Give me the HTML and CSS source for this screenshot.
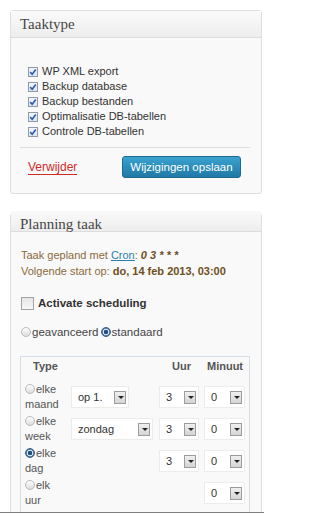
FILE: index.html
```html
<!DOCTYPE html>
<html>
<head>
<meta charset="utf-8">
<link rel="stylesheet" href="styles.css">
</head>
<body>
<div class="page">
  <div class="box box-type">
    <div class="box-head"><h3>Taaktype</h3></div>
    <div class="box-body">
      <ul class="checks">
        <li><span class="cb on"><svg viewBox="0 0 10 10" width="8" height="8"><path d="M1.5 5.2 L4 7.8 L8.5 1.8" fill="none" stroke="#2a5db0" stroke-width="2"/></svg></span>WP XML export</li>
        <li><span class="cb on"><svg viewBox="0 0 10 10" width="8" height="8"><path d="M1.5 5.2 L4 7.8 L8.5 1.8" fill="none" stroke="#2a5db0" stroke-width="2"/></svg></span>Backup database</li>
        <li><span class="cb on"><svg viewBox="0 0 10 10" width="8" height="8"><path d="M1.5 5.2 L4 7.8 L8.5 1.8" fill="none" stroke="#2a5db0" stroke-width="2"/></svg></span>Backup bestanden</li>
        <li><span class="cb on"><svg viewBox="0 0 10 10" width="8" height="8"><path d="M1.5 5.2 L4 7.8 L8.5 1.8" fill="none" stroke="#2a5db0" stroke-width="2"/></svg></span>Optimalisatie DB-tabellen</li>
        <li><span class="cb on"><svg viewBox="0 0 10 10" width="8" height="8"><path d="M1.5 5.2 L4 7.8 L8.5 1.8" fill="none" stroke="#2a5db0" stroke-width="2"/></svg></span>Controle DB-tabellen</li>
      </ul>
      <div class="sep"></div>
      <div class="actions">
        <a class="del" href="#">Verwijder</a>
        <button class="save" type="button">Wijzigingen opslaan</button>
      </div>
    </div>
  </div>

  <div class="box box-plan">
    <div class="box-head"><h3>Planning taak</h3></div>
    <div class="box-body plan-body">
      <p class="info">Taak gepland met <a class="cron" href="#">Cron</a>: <b><i>0 3 * * *</i></b></p>
      <p class="info">Volgende start op: <b>do, 14 feb 2013, 03:00</b></p>
      <div class="activate"><span class="cb big"></span><span>Activate scheduling</span></div>
      <div class="mode"><span class="rd"></span>geavanceerd <span class="rd on"></span>standaard</div>
      <div class="sched">
        <div class="srow head">
          <span class="c-type">Type</span>
          <span></span>
          <span class="c-num">Uur</span>
          <span class="c-num">Minuut</span>
        </div>
        <div class="srow">
          <span class="c-type"><span class="rd"></span>elke<br>maand</span>
          <span class="sel w-op"><span class="val">op 1.</span><span class="arrow"></span></span>
          <span class="sel w-h"><span class="val">3</span><span class="arrow"></span></span>
          <span class="sel w-m"><span class="val">0</span><span class="arrow"></span></span>
        </div>
        <div class="srow">
          <span class="c-type"><span class="rd"></span>elke<br>week</span>
          <span class="sel w-day"><span class="val">zondag</span><span class="arrow"></span></span>
          <span class="sel w-h"><span class="val">3</span><span class="arrow"></span></span>
          <span class="sel w-m"><span class="val">0</span><span class="arrow"></span></span>
        </div>
        <div class="srow">
          <span class="c-type"><span class="rd on"></span>elke<br>dag</span>
          <span></span>
          <span class="sel w-h"><span class="val">3</span><span class="arrow"></span></span>
          <span class="sel w-m"><span class="val">0</span><span class="arrow"></span></span>
        </div>
        <div class="srow">
          <span class="c-type"><span class="rd"></span>elk<br>uur</span>
          <span></span>
          <span></span>
          <span class="sel w-m"><span class="val">0</span><span class="arrow"></span></span>
        </div>
      </div>
    </div>
  </div>
</div>
</body>
</html>
```

FILE: styles.css
```css
html, body {
  margin: 0;
  padding: 0;
  background: #fff;
}
body {
  font-family: "Liberation Sans", Arial, sans-serif;
  font-size: 11px;
  color: #333;
}
.page {
  width: 264px;
  height: 513px;
  overflow: hidden;
  border-bottom: 1px solid #7d7d7d;
  padding-top: 10px;
  box-sizing: border-box;
}
.box {
  margin-left: 10px;
  width: 252px;
  box-sizing: border-box;
  border: 1px solid #dfdfdf;
  border-radius: 3px;
  background: #f9f9f9;
}
.box-head {
  background: linear-gradient(#fafafa, #ededed);
  border-bottom: 1px solid #dcdcdc;
  padding-left: 9px;
}
.box-type .box-head { height: 26px; }
.box-plan .box-head { height: 20px; }
.box-head h3 {
  margin: 0;
  font-family: "Liberation Serif", "Times New Roman", serif;
  font-weight: normal;
  font-size: 15px;
  color: #464646;
}
.box-type .box-head h3 { line-height: 26px; }
.box-plan .box-head h3 { line-height: 26px; margin-top: -3px; }

.checks {
  list-style: none;
  margin: 0;
  padding: 26px 0 0 17px;
}
.checks li {
  height: 15px;
  line-height: 15px;
  display: flex;
  align-items: center;
  color: #333;
}
.cb {
  display: inline-flex;
  align-items: center;
  justify-content: center;
  width: 8px;
  height: 8px;
  border: 1px solid #8f9aab;
  background: linear-gradient(#f4f6f9, #dde3ec);
  margin-right: 4px;
  flex: none;
}
.cb.big {
  width: 11px;
  height: 11px;
  border-color: #a4a4a4;
  background: linear-gradient(#e6e6e6, #f8f8f8);
}
.sep {
  margin: 8px 11px 0 9px;
  border-top: 1px solid #dedede;
}
.actions {
  display: flex;
  justify-content: space-between;
  align-items: center;
  padding: 8px 20px 15px 17px;
}
.del {
  color: #d02a2a;
  font-size: 12px;
  text-decoration: none;
  border-bottom: 1px solid #d02a2a;
  line-height: 14px;
}
.save {
  width: 119px;
  height: 22px;
  border: 1px solid #1e6a8f;
  border-radius: 3px;
  background: linear-gradient(#3aa2d0, #2079a5);
  color: #fff;
  font-family: "Liberation Sans", Arial, sans-serif;
  font-size: 11.5px;
  padding: 0;
}

.box-plan {
  margin-top: 19px;
  height: 600px;
}
.plan-body {
  padding: 15px 0 0 10px;
}
.info {
  margin: 0;
  line-height: 16px;
  color: #8a6a40;
  font-size: 11px;
}
.info b {
  color: #6e4e22;
}
.cron {
  color: #2a7fb0;
  text-decoration: underline;
}
.activate {
  display: flex;
  align-items: center;
  margin-top: 17px;
  height: 14px;
  font-weight: bold;
  font-size: 11.5px;
  color: #333;
}
.mode {
  display: flex;
  align-items: center;
  margin-top: 14px;
  height: 16px;
  color: #444;
  font-size: 11.5px;
}
.rd {
  display: inline-block;
  width: 8px;
  height: 8px;
  border-radius: 50%;
  border: 1px solid #b9b9b9;
  background: linear-gradient(#fff, #dcdcdc);
  margin-right: 1px;
  vertical-align: -1px;
}
.rd.on {
  border-color: #3a5e86;
  background: radial-gradient(circle, #1f4f84 0 2px, #d8e4f0 2.5px 3px, #5b7ea6 3.5px);
}
.mode .rd.on { margin-left: 2px; }

.sched {
  margin: 16px 0 0 -1px;
  width: 230px;
  box-sizing: border-box;
  border: 1px solid #d6dfe9;
  border-bottom: none;
  padding: 1px 0 0 4px;
  height: 200px;
}
.srow {
  display: grid;
  grid-template-columns: 46px 88px 45px 42px;
  align-items: center;
  height: 32px;
  color: #555;
}
.srow.head {
  height: 15px;
  line-height: 15px;
  margin-bottom: 7px;
  font-weight: bold;
  margin-top: 1px;
}
.srow.head .c-type { padding-left: 8px; }
.c-num { text-align: center; }
.c-type {
  line-height: 15px;
}
.sel {
  display: inline-flex;
  align-items: center;
  justify-content: space-between;
  height: 22px;
  box-sizing: border-box;
  background: #fff;
  border: 1px solid #ececec;
  padding: 0 2px 0 6px;
  color: #333;
}
.w-op { width: 58px; }
.w-day { width: 82px; }
.w-h { width: 40px; }
.w-m { width: 41px; }
.arrow {
  width: 12px;
  height: 13px;
  box-sizing: border-box;
  border: 1px solid #9c9c9c;
  background: linear-gradient(#f0f0f0, #d4d4d4);
  position: relative;
}
.arrow::after {
  content: "";
  position: absolute;
  left: 2.5px;
  top: 4.5px;
  border-left: 3px solid transparent;
  border-right: 3px solid transparent;
  border-top: 3px solid #222;
}
```
